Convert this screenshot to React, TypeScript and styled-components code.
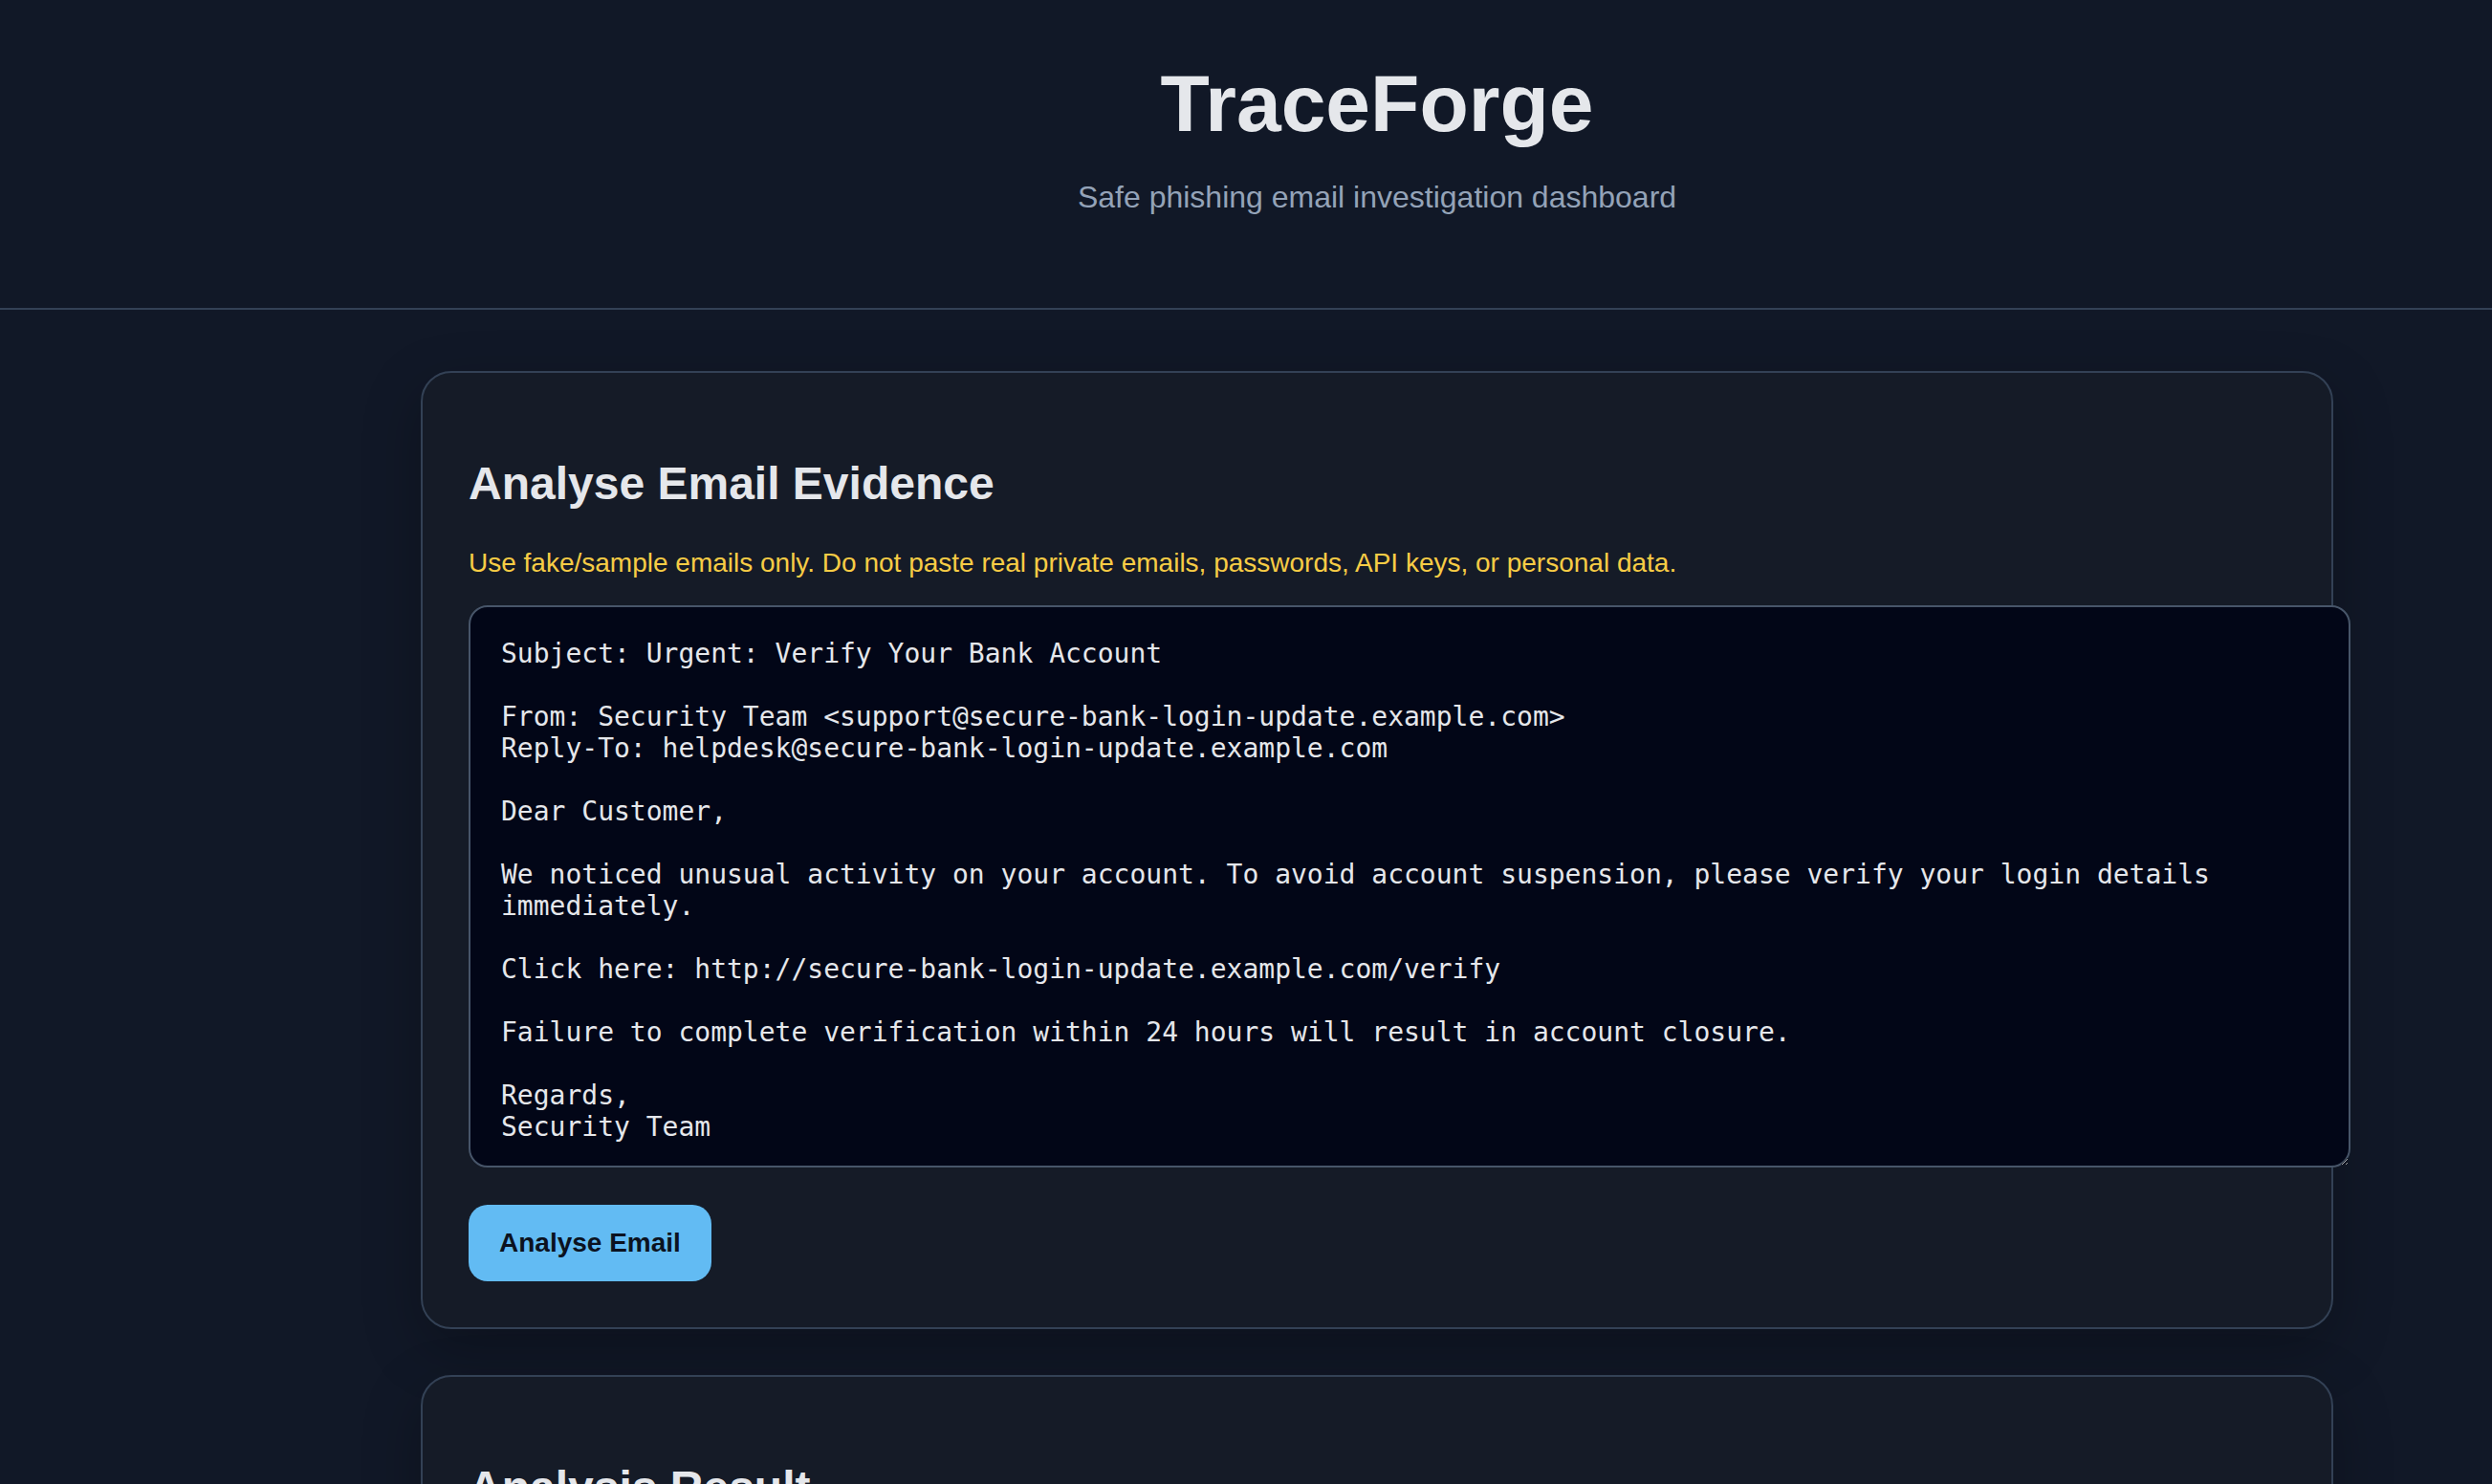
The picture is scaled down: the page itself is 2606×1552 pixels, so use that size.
import React from "react";
import styled, { createGlobalStyle } from "styled-components";

const GlobalStyle = createGlobalStyle`
  html, body {
    margin: 0;
    padding: 0;
    background: #111827;
    overflow: hidden;
  }
  body {
    font-family: "Liberation Sans", Arial, Helvetica, sans-serif;
    color: #e5e7eb;
  }
  * { box-sizing: content-box; }
`;

const Page = styled.div`
  width: 2880px;
  min-height: 1552px;
  background: #111827;
`;

const Header = styled.header`
  display: flex;
  flex-direction: column;
  align-items: center;
  padding: 60px 0 97px;
  border-bottom: 2px solid #334155;
`;

const Title = styled.h1`
  margin: 0;
  font-size: 84px;
  font-weight: 700;
  line-height: normal;
  color: #e5e7eb;
`;

const Subtitle = styled.p`
  margin: 31px 0 0;
  font-size: 32px;
  line-height: normal;
  color: #94a3b8;
`;

const Main = styled.main`
  display: flex;
  flex-direction: column;
  align-items: center;
  gap: 48px;
  padding: 64px 0;
`;

const Card = styled.section`
  width: 1900px;
  padding: 48px;
  background: #151b27;
  border: 2px solid #334155;
  border-radius: 32px;
  box-shadow: 0 20px 60px rgba(0, 0, 0, 0.25);
`;

const CardTitle = styled.h2`
  margin: 40px 0;
  font-size: 48px;
  font-weight: 700;
  line-height: normal;
  color: #e5e7eb;
`;

const Warning = styled.p`
  margin: 28px 0;
  font-size: 28px;
  line-height: normal;
  color: #f7cc45;
`;

const Form = styled.form`
  display: flex;
  flex-direction: column;
  align-items: flex-start;
  gap: 39px;
`;

const EvidenceInput = styled.textarea`
  display: block;
  width: 100%;
  height: 520px;
  padding: 32px;
  margin: 0;
  background: #020617;
  color: #e5e7eb;
  border: 2px solid #475569;
  border-radius: 20px;
  font-family: "DejaVu Sans Mono", "Liberation Mono", monospace;
  font-size: 28px;
  line-height: normal;
  overflow: hidden;
  resize: vertical;
  outline: none;
`;

const PrimaryButton = styled.button`
  padding: 24px 32px;
  background: #62bbf3;
  color: #0b1220;
  border: none;
  border-radius: 20px;
  font-family: "Liberation Sans", Arial, Helvetica, sans-serif;
  font-size: 28px;
  font-weight: 700;
  line-height: normal;
  cursor: pointer;
`;

const sampleEmail = `Subject: Urgent: Verify Your Bank Account

From: Security Team <support@secure-bank-login-update.example.com>
Reply-To: helpdesk@secure-bank-login-update.example.com

Dear Customer,

We noticed unusual activity on your account. To avoid account suspension, please verify your login details immediately.

Click here: http://secure-bank-login-update.example.com/verify

Failure to complete verification within 24 hours will result in account closure.

Regards,
Security Team`;

export default function App() {
  return (
    <>
      <GlobalStyle />
      <Page>
        <Header>
          <Title>TraceForge</Title>
          <Subtitle>Safe phishing email investigation dashboard</Subtitle>
        </Header>
        <Main>
          <Card>
            <CardTitle>Analyse Email Evidence</CardTitle>
            <Warning>
              Use fake/sample emails only. Do not paste real private emails, passwords, API keys, or personal data.
            </Warning>
            <Form onSubmit={(e) => e.preventDefault()}>
              <EvidenceInput defaultValue={sampleEmail} spellCheck={false} />
              <PrimaryButton type="submit">Analyse Email</PrimaryButton>
            </Form>
          </Card>
          <Card>
            <CardTitle>Analysis Result</CardTitle>
          </Card>
        </Main>
      </Page>
    </>
  );
}
